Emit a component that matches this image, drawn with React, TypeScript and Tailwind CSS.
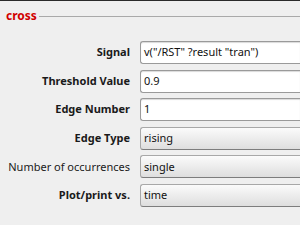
const font = { fontFamily: '"Noto Sans", "DejaVu Sans", sans-serif' }

type Row = { label: string; value: string; bold: boolean; kind: 'input' | 'button' }

const rows: Row[] = [
  { label: 'Signal', value: 'v("/RST" ?result "tran")', bold: true, kind: 'input' },
  { label: 'Threshold Value', value: '0.9', bold: true, kind: 'input' },
  { label: 'Edge Number', value: '1', bold: true, kind: 'input' },
  { label: 'Edge Type', value: 'rising', bold: true, kind: 'button' },
  { label: 'Number of occurrences', value: 'single', bold: false, kind: 'button' },
  { label: 'Plot/print vs.', value: 'time', bold: true, kind: 'button' },
]

function Field({ row }: { row: Row }) {
  if (row.kind === 'input') {
    return (
      <div className="flex h-[23px] flex-1 items-center rounded-l-[3px] border border-r-0 border-[#9a9a9a] bg-white pl-[3px] text-[11px] whitespace-nowrap text-[#111] shadow-[inset_0_1px_1px_rgba(0,0,0,0.15)]">
        {row.value}
      </div>
    )
  }
  return (
    <div className="flex h-[23px] flex-1 items-center rounded-l-[3px] border border-r-0 border-[#a8a8a8] border-b-[#7d7d7d] bg-gradient-to-b from-[#fbfbfb] to-[#dedede] pl-[3px] text-[11px] whitespace-nowrap text-[#111]">
      {row.value}
    </div>
  )
}

export default function App() {
  return (
    <div className="h-[225px] w-[300px] overflow-hidden border-t border-[#2a2a2a] bg-[#efefef]" style={font}>
      <div className="flex items-center pl-[6px] pt-[9px]">
        <span className="text-[12px] font-bold leading-none text-[#d10000]">cross</span>
        <div className="ml-[2px] h-px flex-1 bg-[#a9a9a9]" />
      </div>
      <div className="mt-[19px] flex flex-col gap-[5.6px]">
        {rows.map((row) => (
          <div key={row.label} className="flex items-center">
            <div
              className={`w-[131px] shrink-0 pr-[1px] text-right text-[11px] whitespace-nowrap text-[#1a1a1a] ${row.bold ? 'font-bold' : 'font-normal'}`}
            >
              {row.label}
            </div>
            <div className="ml-[9px] flex flex-1">
              <Field row={row} />
            </div>
          </div>
        ))}
      </div>
    </div>
  )
}
